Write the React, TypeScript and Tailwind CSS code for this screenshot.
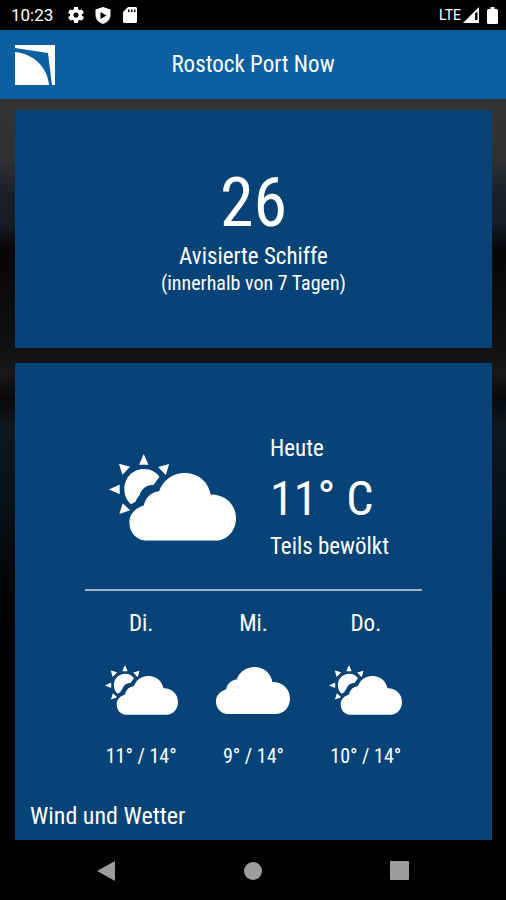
import React from "react";

type Sky = "partly" | "cloudy";

const CLOUD =
  "M165 329H378C412 327 437 299 437 262C437 222 405 190 361 191C355 155 325 127 283 127C248 127 219 148 207 181C183 183 166 200 161 224C135 232 118 250 118 275C118 305 138 326 165 329Z";

function WeatherIcon({ sky, className }: { sky: Sky; className: string }) {
  if (sky === "cloudy") {
    return (
      <svg viewBox="118 127 319 202" className={className} fill="currentColor" role="img" aria-label="Bewölkt">
        <path d={CLOUD} />
      </svg>
    );
  }
  return (
    <svg viewBox="57 70 380 260" className={className} fill="currentColor" role="img" aria-label="Teils bewölkt">
      <path d={CLOUD} />
      <path d="M123 220C109 208 103 192 103 175C103 142 128 115 161 115C182 115 200 125 208 139C202 147 196 154 191 162C168 163 154 174 148 194C142 199 139 207 136 213Z" />
      <path d="M161 70L175 102H147ZM87 99L120 108L97 132ZM237 100L204 109L227 133ZM57 176L89 161V190ZM98 217L120 238L88 249Z" />
    </svg>
  );
}

function StatusBar() {
  return (
    <div className="flex h-[30px] items-center justify-between bg-black pr-2 pl-[11px] font-[Roboto,sans-serif] text-white">
      <div className="flex items-center">
        <span className="w-[57px] text-[17px] leading-5">10:23</span>
        <svg viewBox="2 2 20 20" className="mr-[11px] h-4 w-4" fill="currentColor" aria-hidden="true">
          <path d="M19.4 13a7.500 7.500 0 0 0 0-2l2.100-1.600a.5.5 0 0 0 .1-.7l-2-3.400a.5.5 0 0 0-.6-.2l-2.500 1a7 7 0 0 0-1.700-1L14.500 2.400a.5.5 0 0 0-.5-.4h-4a.5.5 0 0 0-.5.4l-.4 2.700a7 7 0 0 0-1.700 1l-2.500-1a.5.5 0 0 0-.6.2l-2 3.400a.5.5 0 0 0 .1.700L4.600 11a7.500 7.500 0 0 0 0 2l-2.100 1.600a.5.5 0 0 0-.1.700l2 3.400c.1.200.4.300.6.200l2.500-1a7 7 0 0 0 1.700 1l.4 2.700c0 .2.200.4.500.4h4c.2 0 .5-.2.500-.4l.4-2.700a7 7 0 0 0 1.700-1l2.500 1c.2.100.5 0 .6-.2l2-3.400a.5.5 0 0 0-.1-.7ZM12 15.200a3.200 3.200 0 1 1 0-6.400 3.200 3.200 0 0 1 0 6.400Z" />
        </svg>
        <svg viewBox="0 0 16 17" className="mr-3 h-[17px] w-4" fill="currentColor" fillRule="evenodd" aria-hidden="true">
          <path d="M8 0L15.500 2.500V8C15.500 12 12.500 15.500 8 17C3.500 15.500 .5 12 .5 8V2.500ZM5.500 5V12L11.500 8.500Z" />
        </svg>
        <svg viewBox="0 0 14 16" className="h-4 w-[14px]" fill="currentColor" fillRule="evenodd" aria-hidden="true">
          <path d="M5 0H12.500Q14 0 14 1.500V14.500Q14 16 12.500 16H1.500Q0 16 0 14.500V5ZM5 2.500V5H6.500V2.500ZM8 2.500V5H9.500V2.500ZM11 2.500V5H12.500V2.500Z" />
        </svg>
      </div>
      <div className="flex items-center">
        <span className="text-sm leading-5">LTE</span>
        <svg viewBox="0 0 16 16" className="ml-[2px] h-4 w-4" aria-hidden="true" fill="currentColor" fillRule="evenodd">
          <path d="M16 0V16H0ZM12 6.500V13H14.500V4.500Z" />
        </svg>
        <svg viewBox="0 0 11 17" className="ml-2 h-[17px] w-[11px]" aria-hidden="true" fill="currentColor">
          <path d="M3.500 0H7.500V2H9.500Q11 2 11 3.500V15.500Q11 17 9.500 17H1.500Q0 17 0 15.500V3.500Q0 2 1.500 2H3.500Z" />
        </svg>
      </div>
    </div>
  );
}

function Header() {
  return (
    <header className="grid h-[69px] grid-cols-[1fr_auto_1fr] items-center bg-[#0c60a2] px-[15px]">
      <svg viewBox="0 0 40 40" className="h-10 w-10 text-white" fill="currentColor" role="img" aria-label="Rostock Port">
        <path d="M0 7C19 9 32 22 34 40H0Z" />
        <path d="M0 0H40V40H37L33 8L0 3Z" />
      </svg>
      <h1 className="text-[23px] leading-8">Rostock Port Now</h1>
    </header>
  );
}

const forecast: { day: string; sky: Sky; temps: string }[] = [
  { day: "Di.", sky: "partly", temps: "11° / 14°" },
  { day: "Mi.", sky: "cloudy", temps: "9° / 14°" },
  { day: "Do.", sky: "partly", temps: "10° / 14°" },
];

export default function App() {
  return (
    <div className="flex min-h-screen flex-col bg-black font-['Roboto_Condensed','Liberation_Sans_Narrow','Liberation_Sans',sans-serif] text-white">
      <StatusBar />
      <Header />
      <main className="flex flex-1 flex-col gap-[15px] bg-[linear-gradient(180deg,#343434_0px,#303132_60px,#1a202a_95px,#171c25_125px,#050607_150px,#08090a_175px,#111111_250px,#1a1719_275px,#070809_300px,#10181e_325px,#071118_410px,#010405_500px,#000000_560px)] pt-[11px] pr-[14px] pl-[15px]">
        <section className="flex h-[238px] flex-col items-center justify-center bg-[#074377] pt-1">
          <p className="text-[68px] leading-[72px]">26</p>
          <h2 className="mt-1 text-[23px] leading-7">Avisierte Schiffe</h2>
          <p className="text-xl leading-6">(innerhalb von 7 Tagen)</p>
        </section>
        <section className="flex flex-1 flex-col bg-[#074377] pt-[70px]">
          <div className="mx-[70px] flex items-center border-b-2 border-[#9fb6cc] pb-7 pl-6">
            <WeatherIcon sky="partly" className="h-[87px] w-[127px]" />
            <div className="ml-[34px]">
              <p className="text-[23px] leading-8">Heute</p>
              <p className="text-5xl leading-[68px]">11° C</p>
              <p className="text-[23px] leading-7">Teils bewölkt</p>
            </div>
          </div>
          <ul className="mx-[70px] grid grid-cols-3 pt-[17px]">
            {forecast.map(({ day, sky, temps }) => (
              <li key={day} className="flex flex-col items-center">
                <span className="text-[23px] leading-8">{day}</span>
                <span className="flex h-[100px] items-center">
                  <WeatherIcon sky={sky} className={sky === "cloudy" ? "h-[47px] w-[74px]" : "h-[50px] w-[73px]"} />
                </span>
                <span className="text-xl leading-8">{temps}</span>
              </li>
            ))}
          </ul>
          <h2 className="mt-auto px-[15px] pb-2 text-2xl leading-8">Wind und Wetter</h2>
        </section>
      </main>
      <nav className="flex h-[60px] items-center justify-between bg-black px-24 pt-[2px] text-[#9d9d9d]" aria-label="System">
        <button type="button" aria-label="Zurück">
          <svg viewBox="0 0 20 20" className="h-5 w-5" fill="currentColor"><path d="M1 10L19 0V20Z" /></svg>
        </button>
        <button type="button" aria-label="Start">
          <svg viewBox="0 0 20 20" className="h-5 w-5" fill="currentColor"><circle cx="10" cy="10" r="9" /></svg>
        </button>
        <button type="button" aria-label="Übersicht">
          <svg viewBox="0 0 20 20" className="h-5 w-5" fill="currentColor"><rect x="0" y="0" width="19" height="19" rx="1" /></svg>
        </button>
      </nav>
    </div>
  );
}
